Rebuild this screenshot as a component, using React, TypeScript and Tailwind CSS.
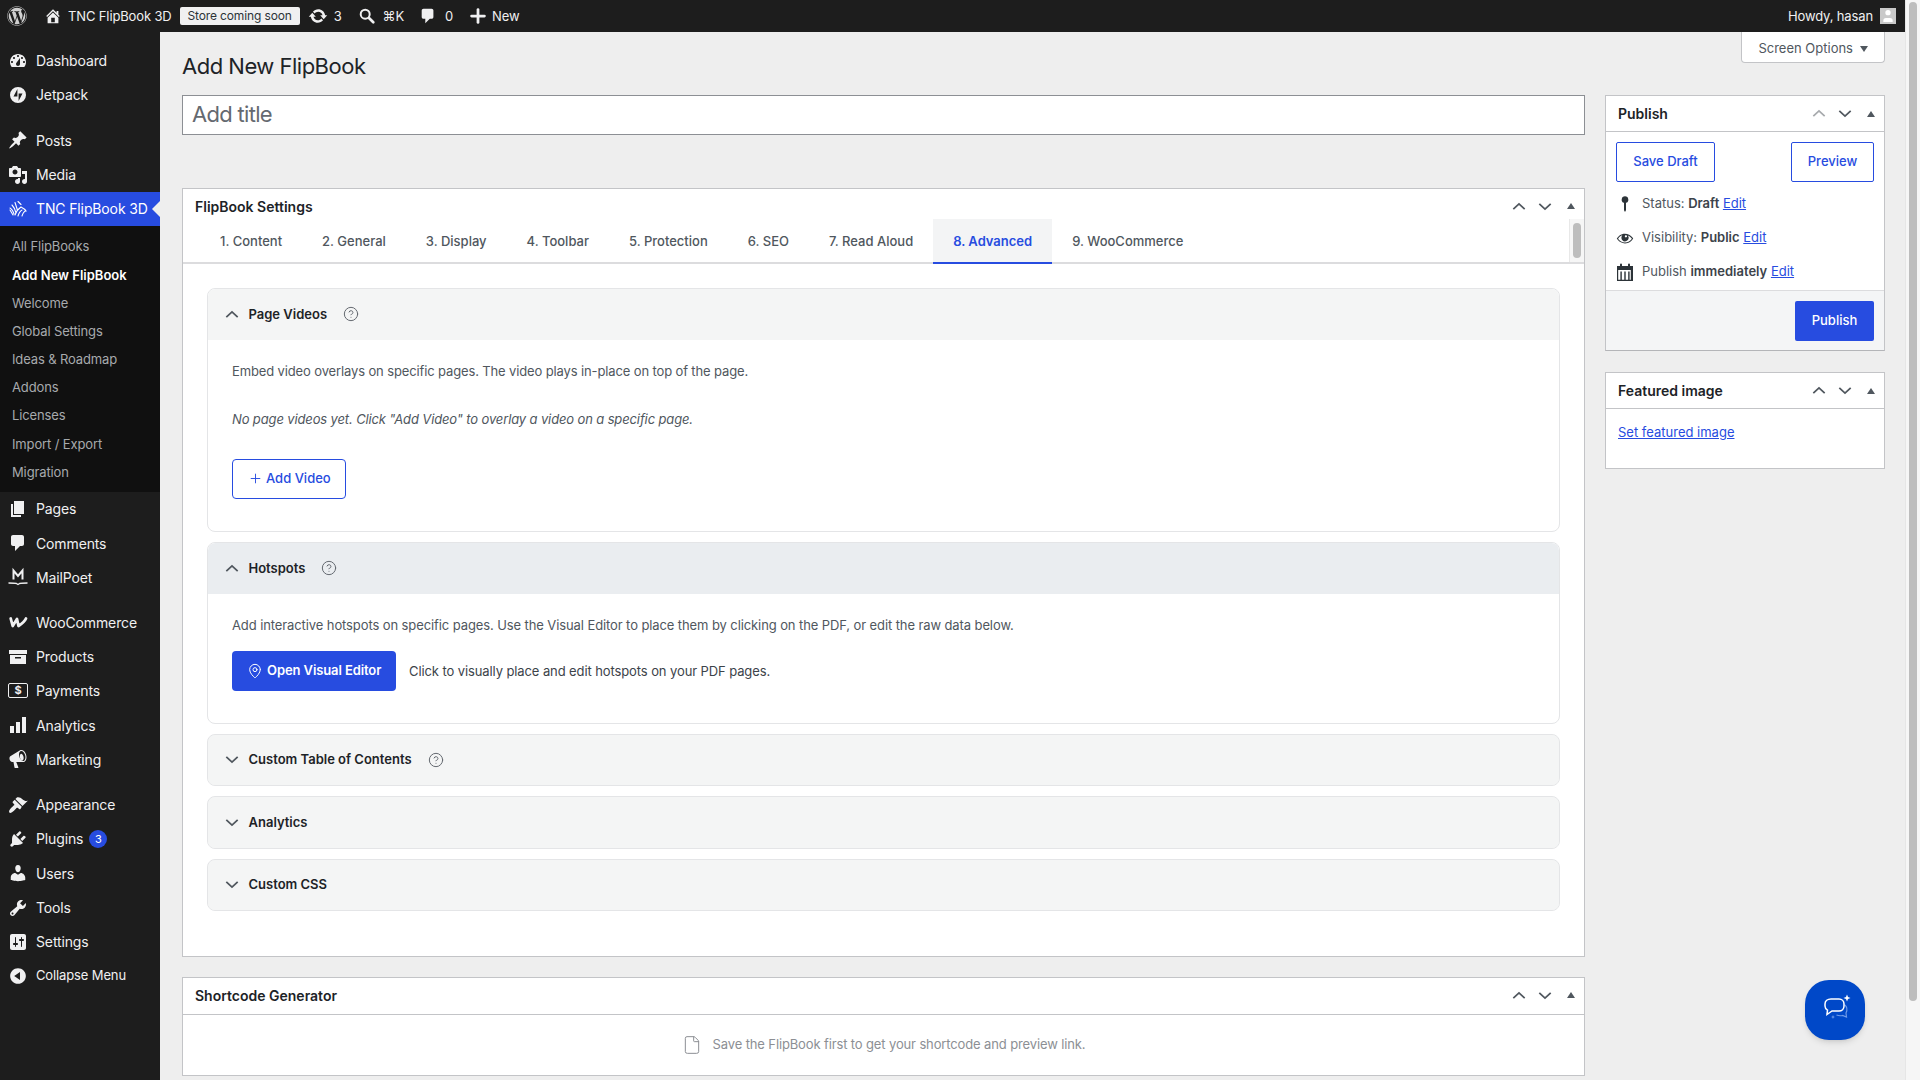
import type { ReactNode } from "react"
import { FaWordpress } from "react-icons/fa"
import { CircleHelp, File, MapPin, Plus, User } from "lucide-react"

const Dash = ({ d, className = "w-5 h-5" }: { d: string; className?: string }) => (
    <svg viewBox="0 0 20 20" fill="currentColor" className={className}>
        <path fillRule="evenodd" d={d} />
    </svg>
)

const d = {
    dashboard: "M3.76 16h12.48c1.1-1.37 1.76-3.11 1.76-5 0-4.42-3.58-8-8-8s-8 3.58-8 8c0 1.89.66 3.63 1.76 5zM10 4c.55 0 1 .45 1 1s-.45 1-1 1-1-.45-1-1 .45-1 1-1zM6 6c.55 0 1 .45 1 1s-.45 1-1 1-1-.45-1-1 .45-1 1-1zm8 0c.55 0 1 .45 1 1s-.45 1-1 1-1-.45-1-1 .45-1 1-1zm-5.37 5.55L12 7v6c0 1.1-.9 2-2 2s-2-.9-2-2c0-.57.24-1.08.63-1.45zM4 10c.55 0 1 .45 1 1s-.45 1-1 1-1-.45-1-1 .45-1 1-1zm12 0c.55 0 1 .45 1 1s-.45 1-1 1-1-.45-1-1 .45-1 1-1z",
    jetpack: "M10 2a8 8 0 1 0 0 16 8 8 0 0 0 0-16zM9.4 3.9v7.6H5.5zM10.6 16.1V8.5h3.9z",
    post: "M10.44 3.02l1.82-1.82 6.36 6.35-1.83 1.82c-1.05-.68-2.48-.57-3.41.36l-.75.75c-.92.93-1.04 2.35-.35 3.41l-1.83 1.82-2.41-2.41-2.8 2.79c-.42.42-3.38 2.71-3.8 2.29s1.86-3.39 2.28-3.81l2.79-2.79L4.1 9.36l1.83-1.82c1.05.69 2.48.57 3.4-.36l.75-.75c.93-.92 1.05-2.35.36-3.41z",
    media: "M13 11V4c0-.55-.45-1-1-1h-1.67L9 1H5L3.67 3H2c-.55 0-1 .45-1 1v7c0 .55.45 1 1 1h10c.55 0 1-.45 1-1zM7 4.5c1.38 0 2.5 1.12 2.5 2.5S8.38 9.5 7 9.5 4.5 8.38 4.5 7 5.62 4.5 7 4.5zM14 6h5v10.5c0 1.38-1.12 2.5-2.5 2.5S14 17.88 14 16.5s1.12-2.5 2.5-2.5c.17 0 .34.02.5.05V9h-3V6zm-4 8.05V13h2v3.5c0 1.38-1.12 2.5-2.5 2.5S7 17.88 7 16.5 8.12 14 9.5 14c.17 0 .34.02.5.05z",
    page: "M6 15V2h10v13H6zm-1 1h8v2H3V5h2v11z",
    comment: "M5 2h9c1.1 0 2 .9 2 2v7c0 1.1-.9 2-2 2h-2l-5 5v-5H5c-1.1 0-2-.9-2-2V4c0-1.1.9-2 2-2z",
    products: "M1 3h18v4H1zM2 8h16v9H2zM7 10v1.5h6V10z",
    analytics: "M2 11h4v7H2zM8 7h4v11H8zM14 2h4v16h-4z",
    marketing: "M18.15 5.94c.46 1.62.38 3.22-.02 4.48-.42 1.28-1.26 2.18-2.3 2.48-.16.06-.26.06-.4.06-.06.02-.12.02-.18.02-.06.02-.14.02-.22.02h-6.8l2.22 5.5c.02.14-.06.26-.14.34-.08.1-.24.16-.34.16H6.95c-.1 0-.26-.06-.34-.16-.08-.08-.16-.2-.14-.34l-1-5.5H4.25l-.02-.02c-.5.06-1.08-.18-1.54-.62s-.88-1.08-1.06-1.88c-.24-.8-.2-1.56-.02-2.2.18-.62.58-1.08 1.06-1.3l.02-.02 9-5.4c.1-.06.18-.1.24-.16.06-.04.14-.08.24-.12.16-.08.28-.12.5-.18 1.04-.3 2.24.1 3.22.98s1.84 2.24 2.26 3.86zm-2.58 5.98h-.02c.4-.1.74-.34 1.04-.7.58-.7.86-1.76.86-3.04 0-.64-.1-1.3-.28-1.98-.34-1.36-1.02-2.5-1.78-3.24s-1.68-1.1-2.46-.88c-.82.22-1.4.96-1.7 2-.32 1.04-.28 2.36.06 3.72.38 1.36 1 2.5 1.8 3.24.78.74 1.62 1.1 2.48.88zm-2.54-7.08c.22-.04.42-.02.62.04.38.16.76.48 1.1 1s.58 1.14.74 1.84c.16.68.2 1.34.1 1.92-.1.56-.3 1.04-.6 1.38-.16.2-.34.32-.56.38-.22.06-.42.04-.62-.04-.2-.1-.4-.24-.6-.44-.5-.52-.94-1.3-1.2-2.24-.24-.96-.24-1.86-.02-2.58.2-.7.58-1.16 1.04-1.26z",
    appearance: "M14.48 11.06L7.41 3.99l1.5-1.5c.5-.56 2.3-.47 3.51.32 1.21.8 1.43 1.28 2.91 2.1 1.18.64 2.45 1.26 4.45.85zm-.71.71L6.7 4.7 4.93 6.47c-.39.39-.39 1.02 0 1.41l1.06 1.06c.39.39.39 1.03 0 1.42-.6.6-6.37 5.43-4.6 7.2 1.77 1.77 6.6-4 7.2-4.6.39-.39 1.03-.39 1.42 0l1.06 1.06c.39.39 1.02.39 1.41 0z",
    plugins: "M13.11 4.36L9.87 7.6 8 5.73l3.24-3.24c.35-.34 1.05-.2 1.56.32.52.51.66 1.21.31 1.55zm-8 1.77l.91-1.12 9.01 9.01-1.19.84c-.71.71-2.63 1.16-3.82 1.16H6.14L4.9 17.26c-.59.59-1.54.59-2.12 0-.59-.58-.59-1.53 0-2.12l1.24-1.24v-3.88c0-1.13.4-3.19 1.09-3.89zm7.26 3.97l3.24-3.24c.34-.35 1.04-.21 1.55.31.52.51.66 1.21.31 1.55l-3.24 3.25z",
    users: "M10 9.25c-2.27 0-2.73-3.44-2.73-3.44C7 4.02 7.82 2 9.97 2c2.16 0 2.98 2.02 2.71 3.81 0 0-.41 3.44-2.68 3.44zm0 2.57L12.72 10c2.39 0 4.52 2.33 4.52 4.53v2.49s-3.65 1.13-7.24 1.13c-3.65 0-7.24-1.13-7.24-1.13v-2.49c0-2.25 1.94-4.48 4.47-4.48z",
    tools: "M16.68 9.77c-1.34 1.34-3.3 1.67-4.95.99l-5.41 6.52c-.99.99-2.59.99-3.58 0s-.99-2.59 0-3.57l6.52-5.42c-.68-1.65-.35-3.61.99-4.95 1.28-1.28 3.12-1.62 4.72-1.06l-2.89 2.89 2.82 2.82 2.86-2.87c.53 1.58.18 3.39-1.08 4.65zM3.81 16.21c.4.39 1.04.39 1.43 0 .4-.4.4-1.04 0-1.43-.39-.4-1.03-.4-1.43 0-.39.39-.39 1.03 0 1.43z",
    settings: "M18 16V4c0-1.1-.9-2-2-2H4c-1.1 0-2 .9-2 2v12c0 1.1.9 2 2 2h12c1.1 0 2-.9 2-2zM8 11h1c.55 0 1 .45 1 1s-.45 1-1 1H8v1.5c0 .28-.22.5-.5.5s-.5-.22-.5-.5V13H6c-.55 0-1-.45-1-1s.45-1 1-1h1V5.5c0-.28.22-.5.5-.5s.5.22.5.5V11zm5-2h-1c-.55 0-1-.45-1-1s.45-1 1-1h1V5.5c0-.28.22-.5.5-.5s.5.22.5.5V7h1c.55 0 1 .45 1 1s-.45 1-1 1h-1v5.5c0 .28-.22.5-.5.5s-.5-.22-.5-.5V9z",
    collapse: "M10 2.16c4.33 0 7.84 3.51 7.84 7.84s-3.51 7.84-7.84 7.84S2.16 14.33 2.16 10 5.71 2.16 10 2.16zm2 11.72V6.12L6.18 9.97z",
    home: "M16 8.5l1.53 1.53-1.06 1.06L10 4.62l-6.47 6.47-1.06-1.06L10 2.5l4 4v-2h2v4zm-6-2.46l6 5.99V18H4v-5.97zM12 17v-5H8v5h4z",
    update: "M10.2 3.28c3.53 0 6.43 2.61 6.92 6h2.08l-3.5 4-3.5-4h2.32c-.45-1.97-2.21-3.45-4.32-3.45-1.45 0-2.73.71-3.54 1.78L4.95 5.66C6.23 4.2 8.11 3.28 10.2 3.28zm-.4 13.44c-3.52 0-6.43-2.61-6.92-6H.8l3.5-4c1.17 1.33 2.33 2.67 3.5 4H5.48c.45 1.97 2.21 3.45 4.32 3.45 1.45 0 2.73-.71 3.54-1.78l1.71 1.95c-1.28 1.46-3.15 2.38-5.25 2.38z",
    eye: "M18.3 9.5C15 4.9 8.5 3.8 3.9 7.2c-1.2.9-2.2 2.1-3 3.4.2.4.5.8.8 1.2 3.3 4.6 9.6 5.6 14.2 2.4.9-.7 1.7-1.4 2.4-2.4.3-.4.5-.8.8-1.2-.3-.4-.5-.8-.8-1.1zm-8.2-2.3c.5-.5 1.3-.5 1.8 0s.5 1.3 0 1.8-1.3.5-1.8 0-.5-1.3 0-1.8zm-.1 7.7c-3.1 0-6-1.6-7.7-4.2C3.5 9 5.1 7.8 7 7c-.7.8-1 1.7-1 2.7 0 2.2 1.7 4.1 4 4.1 2.2 0 4.1-1.7 4.1-4 0-1-.4-2-1.1-2.7 1.9.8 3.5 2 4.7 3.7-1.700 2.6-4.6 4.2-7.7 4.2z",
    pin: "M10 1.500a3.700 3.700 0 0 1 1.100 7.230V17l-1.100 2-1.100-2V8.730A3.700 3.700 0 0 1 10 1.500z",
    calendar: "M2 4h3V2.5a1 1 0 0 1 2 0V4h6V2.5a1 1 0 0 1 2 0V4h3v15H2zM3.2 8v9.8h2.2V9.4h1.4v8.4h2.5V9.4h1.4v8.4h2.5V9.4h1.4v8.4h1.2V8z",
}

const SideIcon = ({ path }: { path: string }) => <Dash d={path} />

const TncIcon = () => (
    <svg viewBox="0 0 20 20" fill="none" stroke="currentColor" strokeWidth="1.1" strokeLinecap="round" className="w-5 h-5">
        <path d="M2 9c2 1 3 3 4 6M4 6c2 2 3 4 4 8M7 3.500c1 3 2 6 2.500 8M10 2.500l3 3M2 11l3 5M7 16c1-3 3-6 6-8 2 1 4 2 5 4-2 0-3 2-4 5M10 17c1-3 2-5 4-6" />
    </svg>
)

const MailPoetIcon = () => (
    <svg viewBox="0 0 20 20" fill="none" stroke="currentColor" className="w-5 h-5">
        <path strokeWidth="2" d="M5.500 12.500V3.500L10 9l4.500-5.500v9" />
        <path strokeWidth="1.300" d="M0.500 16c3 0 6 0 8 .5l1.500 1 1.500-1c2-.5 5-.5 8-.5" />
    </svg>
)

const WooIcon = () => (
    <svg viewBox="0 0 20 20" fill="none" stroke="currentColor" strokeWidth="2.800" strokeLinejoin="round" strokeLinecap="round" className="w-[21px] h-5">
        <path d="M2.200 6.500l2 7.500 4.300-7 1.500 7c3-2 6-4 7.500-7.500" />
    </svg>
)

const PaymentsIcon = () => (
    <span className="flex items-center justify-center w-5 h-[15px] border-[1.5px] border-[#f0f0f1] rounded-[2px] text-[11px] leading-none font-bold">
        $
    </span>
)

const SearchIcon = () => (
    <svg viewBox="0 0 20 20" fill="none" stroke="currentColor" className="w-[18px] h-[18px]">
        <circle cx="8" cy="8" r="5" strokeWidth="2.200" />
        <path strokeWidth="3" strokeLinecap="round" d="M12.500 12.500l4.500 4.500" />
    </svg>
)

type MenuEntry = { label: string; icon: ReactNode; badge?: string; small?: boolean }

const groupOne: MenuEntry[] = [
    { label: "Dashboard", icon: <SideIcon path={d.dashboard} /> },
    { label: "Jetpack", icon: <SideIcon path={d.jetpack} /> },
]
const groupTwo: MenuEntry[] = [
    { label: "Posts", icon: <SideIcon path={d.post} /> },
    { label: "Media", icon: <SideIcon path={d.media} /> },
]
const subMenu = ["All FlipBooks", "Add New FlipBook", "Welcome", "Global Settings", "Ideas & Roadmap", "Addons", "Licenses", "Import / Export", "Migration"]
const groupThree: MenuEntry[] = [
    { label: "Pages", icon: <SideIcon path={d.page} /> },
    { label: "Comments", icon: <SideIcon path={d.comment} /> },
    { label: "MailPoet", icon: <MailPoetIcon /> },
]
const groupFour: MenuEntry[] = [
    { label: "WooCommerce", icon: <WooIcon /> },
    { label: "Products", icon: <SideIcon path={d.products} /> },
    { label: "Payments", icon: <PaymentsIcon /> },
    { label: "Analytics", icon: <SideIcon path={d.analytics} /> },
    { label: "Marketing", icon: <SideIcon path={d.marketing} /> },
]
const groupFive: MenuEntry[] = [
    { label: "Appearance", icon: <SideIcon path={d.appearance} /> },
    { label: "Plugins", icon: <SideIcon path={d.plugins} />, badge: "3" },
    { label: "Users", icon: <SideIcon path={d.users} /> },
    { label: "Tools", icon: <SideIcon path={d.tools} /> },
    { label: "Settings", icon: <SideIcon path={d.settings} /> },
    { label: "Collapse Menu", icon: <SideIcon path={d.collapse} />, small: true },
]

const MenuRow = ({ item }: { item: MenuEntry }) => (
    <div className={`flex items-center h-[34.3px] text-[#f0f0f1] ${item.small ? "text-[13px]" : "text-[14px]"}`}>
        <span className="flex items-center justify-center w-9 shrink-0">{item.icon}</span>
        <span>{item.label}</span>
        {item.badge && (
            <span className="ml-[6px] flex items-center justify-center w-[18px] h-[18px] rounded-full bg-[#274ce0] text-white text-[11px]">
                {item.badge}
            </span>
        )}
    </div>
)

const MenuGroup = ({ items }: { items: MenuEntry[] }) => (
    <div>
        {items.map((item) => (
            <MenuRow key={item.label} item={item} />
        ))}
    </div>
)

const Sidebar = () => (
    <aside className="w-[160px] shrink-0 bg-[#1d1d1d] pt-[11.5px] tracking-[-0.13px]">
        <MenuGroup items={groupOne} />
        <div className="h-[11px]" />
        <MenuGroup items={groupTwo} />
        <div className="relative flex items-center h-[34.3px] bg-[#274ce0] text-white text-[14px]">
            <span className="flex items-center justify-center w-9"><TncIcon /></span>
            <span>TNC FlipBook 3D</span>
            <span className="absolute right-0 top-[9px] w-0 h-0 border-y-8 border-y-transparent border-r-8 border-r-[#eeeeee]" />
        </div>
        <div className="bg-[#101010] pt-[7px] pb-[5px]">
            {subMenu.map((label, i) => (
                <div key={label} className={`h-[28.2px] flex items-center pl-3 text-[13px] ${i === 1 ? "text-white font-semibold tracking-normal" : "text-[#a7aaad]"}`}>
                    {label}
                </div>
            ))}
        </div>
        <MenuGroup items={groupThree} />
        <div className="h-[10.5px]" />
        <MenuGroup items={groupFour} />
        <div className="h-[11px]" />
        <MenuGroup items={groupFive} />
    </aside>
)

const AdminBar = () => (
    <header className="h-8 shrink-0 flex items-center bg-[#1d1d1d] text-[#f0f0f1] text-[13px] tracking-[-0.13px]">
        <FaWordpress className="ml-[7px] w-5 h-5 text-[#d0d0d0]" />
        <Dash d={d.home} className="ml-[17px] w-[18px] h-[18px]" />
        <span className="ml-[6px] pt-px">TNC FlipBook 3D</span>
        <span className="ml-[8px] h-[18px] w-[120px] flex items-center justify-center bg-[#f0f0f1] text-[#2c3338] text-[12px] rounded-[2px]">Store coming soon</span>
        <Dash d={d.update} className="ml-[8px] w-[20px] h-[20px]" />
        <span className="ml-[6px] pt-px">3</span>
        <span className="ml-[16px]"><SearchIcon /></span>
        <span className="ml-[7px] pt-px">⌘K</span>
        <Dash d={d.comment} className="ml-[15px] w-[18px] h-[18px]" />
        <span className="ml-[8px] pt-px">0</span>
        <Plus className="ml-[14px] w-[22px] h-[22px]" strokeWidth={3} />
        <span className="ml-[3px] pt-px">New</span>
        <span className="ml-auto pt-px">Howdy, hasan</span>
        <span className="ml-[7px] mr-[9px] w-4 h-4 bg-[#c9c9c9] flex items-end justify-center overflow-hidden">
            <User className="w-4 h-4 text-white" fill="currentColor" strokeWidth={0} />
        </span>
    </header>
)

const Chevron = ({ up, muted }: { up?: boolean; muted?: boolean }) => (
    <svg viewBox="0 0 16 10" fill="none" strokeWidth="2" className={`w-[14px] h-[9px] ${muted ? "stroke-[#a7aaad]" : "stroke-[#50575e]"}`}>
        <path d={up ? "M1.500 8L8 2l6.500 6" : "M1.500 2L8 8l6.500-6"} />
    </svg>
)

const BoxControls = ({ mutedUp }: { mutedUp?: boolean }) => (
    <div className="flex items-center">
        <span className="flex justify-center w-[26px]"><Chevron up muted={mutedUp} /></span>
        <span className="flex justify-center w-[26px]"><Chevron /></span>
        <span className="ml-[9px] mr-[9px] w-0 h-0 border-x-[4px] border-x-transparent border-b-[6px] border-b-[#50575e]" />
    </div>
)

const BoxHeader = ({ title, bordered, h, mutedUp }: { title: string; bordered?: boolean; h: string; mutedUp?: boolean }) => (
    <div className={`flex items-center justify-between pl-3 ${h} ${bordered ? "border-b border-[#c3c4c7]" : ""}`}>
        <h2 className="text-[14px] font-semibold text-[#1d2327]">{title}</h2>
        <BoxControls mutedUp={mutedUp} />
    </div>
)

const tabs = ["1. Content", "2. General", "3. Display", "4. Toolbar", "5. Protection", "6. SEO", "7. Read Aloud", "8. Advanced", "9. WooCommerce"]

const Tabs = () => (
    <div className="relative flex h-[45px] pl-[17px] border-b-2 border-[#dcdcde]">
        {tabs.map((t) => (
            <div
                key={t}
                className={`flex items-center px-5 h-[45px] pt-[2px] border-b-2 text-[13px] font-medium ${t === "8. Advanced" ? "bg-[#f3f4f5] text-[#274ce0] border-[#274ce0] font-semibold" : "text-[#50575e] border-transparent"}`}
            >
                {t}
            </div>
        ))}
        <div className="absolute right-0 top-0 bottom-0 w-[15px] bg-[#f6f6f6] border-l border-[#e8e8e8]">
            <div className="mx-auto mt-1 w-2 h-[35px] rounded bg-[#bdbdbd]" />
        </div>
    </div>
)

const SectionHead = ({ title, open, help, active }: { title: string; open?: boolean; help?: boolean; active?: boolean }) => (
    <div className={`flex items-center h-[50.5px] pl-[17px] rounded-t-[7px] ${active ? "bg-[#eaedf0]" : "bg-[#f4f5f5]"}`}>
        <Chevron up={open} />
        <span className="ml-[9.5px] text-[13px] font-semibold text-[#1d2327]">{title}</span>
        {help && <CircleHelp className="ml-4 w-4 h-4 text-[#646970]" strokeWidth={1.500} />}
    </div>
)

const Section = ({ title, open, help, active, children }: { title: string; open?: boolean; help?: boolean; active?: boolean; children?: ReactNode }) => (
    <section className={`border border-[#e4e5e7] rounded-lg overflow-hidden ${open ? "" : "bg-[#f4f5f5]"}`}>
        <SectionHead title={title} open={open} help={help} active={active} />
        {children}
    </section>
)

const Settings = () => (
    <div className="bg-white border border-[#c3c4c7]">
        <div className="pt-[4px]">
            <BoxHeader title="FlipBook Settings" h="h-[26px]" />
        </div>
        <Tabs />
        <div className="flex flex-col gap-[10px] pt-[24px] pb-[45px] px-6">
            <Section title="Page Videos" open help>
                <div className="px-6 h-[191.5px] pt-[22px] text-[13px] leading-[19px] text-[#50575e] tracking-[-0.13px]">
                    <p>Embed video overlays on specific pages. The video plays in-place on top of the page.</p>
                    <p className="mt-[29px] italic">No page videos yet. Click "Add Video" to overlay a video on a specific page.</p>
                    <button className="mt-[30px] flex items-center gap-[3px] h-10 w-[114px] pl-[15px] border border-[#274ce0] rounded-[4px] text-[#274ce0] font-medium tracking-normal">
                        <Plus className="w-[15px] h-[15px]" strokeWidth={1.500} /> Add Video
                    </button>
                </div>
            </Section>
            <Section title="Hotspots" open help active>
                <div className="px-6 h-[129px] pt-[22px] text-[13px] leading-[19px] text-[#50575e] tracking-[-0.1px]">
                    <p>Add interactive hotspots on specific pages. Use the Visual Editor to place them by clicking on the PDF, or edit the raw data below.</p>
                    <div className="mt-[16px] flex items-center gap-[13px]">
                        <button className="flex items-center gap-[4px] h-10 w-[164px] pl-[15px] bg-[#274ce0] rounded-[4px] text-white font-semibold">
                            <MapPin className="w-4 h-4" strokeWidth={1.500} /> Open Visual Editor
                        </button>
                        <span className="pt-px text-[#3c434a]">Click to visually place and edit hotspots on your PDF pages.</span>
                    </div>
                </div>
            </Section>
            <Section title="Custom Table of Contents" help />
            <Section title="Analytics" />
            <Section title="Custom CSS" />
        </div>
    </div>
)

const Shortcode = () => (
    <div className="mt-[20px] bg-white border border-[#c3c4c7]">
        <BoxHeader title="Shortcode Generator" h="h-[37px] pb-[2px]" bordered />
        <div className="flex items-center justify-center gap-[11px] h-[60px] text-[13px] text-[#8c8f94] tracking-[-0.13px]">
            <File className="w-5 h-5" strokeWidth={1.200} />
            Save the FlipBook first to get your shortcode and preview link.
        </div>
    </div>
)

const StatusRow = ({ path, iconClass, children }: { path: string; iconClass?: string; children: ReactNode }) => (
    <div className="flex items-center h-[34px] pl-[10px] text-[13px] text-[#50575e]">
        <span className="w-[26px] shrink-0 text-[#2c3338]">
            <Dash d={path} className={iconClass ?? "w-[18px] h-[18px]"} />
        </span>
        <span>{children}</span>
    </div>
)

const EditLink = () => <a className="text-[#274ce0] underline">Edit</a>

const Publish = () => (
    <div className="bg-white border border-[#c3c4c7] border-b-[#b4b5b8]">
        <BoxHeader title="Publish" h="h-[36px]" bordered mutedUp />
        <div className="flex justify-between px-[10px] pt-[10px]">
            <button className="h-10 w-[99px] border border-[#274ce0] rounded-[2px] text-[13px] font-medium text-[#274ce0]">Save Draft</button>
            <button className="h-10 w-[83px] border border-[#274ce0] rounded-[2px] text-[13px] font-medium text-[#274ce0]">Preview</button>
        </div>
        <div className="pt-[5px] pb-[1px]">
            <StatusRow path={d.pin}>Status: <b className="font-semibold text-[#3c434a]">Draft</b> <EditLink /></StatusRow>
            <StatusRow path={d.eye}>Visibility: <b className="font-semibold text-[#3c434a]">Public</b> <EditLink /></StatusRow>
            <StatusRow path={d.calendar} iconClass="w-5 h-5 -ml-px">Publish <b className="font-semibold text-[#3c434a]">immediately</b> <EditLink /></StatusRow>
        </div>
        <div className="flex justify-end h-[60px] pt-[10px] pr-[10px] bg-[#f4f5f6] border-t border-[#dcdcde]">
            <button className="h-10 w-[79px] bg-[#274ce0] rounded-[2px] text-[13px] font-medium text-white">Publish</button>
        </div>
    </div>
)

const FeaturedImage = () => (
    <div className="mt-[21px] bg-white border border-[#c3c4c7]">
        <BoxHeader title="Featured image" h="h-[36px]" bordered />
        <div className="h-[59px] pl-3 pt-[14px] text-[13px] leading-[19px]">
            <a className="text-[#274ce0] underline">Set featured image</a>
        </div>
    </div>
)

const ChatButton = () => (
    <button className="absolute left-[1805px] top-[980px] flex items-center justify-center w-[60px] h-[60px] rounded-[24px] bg-[#0048c8] shadow-md">
        <svg viewBox="0 0 34 34" fill="none" className="w-[34px] h-[34px]">
            <path stroke="#6f9be8" strokeWidth="1.200" d="M27 12c2 2 2.500 5 1 8l.5 4-4-1.500c-2 .5-4 .3-6-.5" />
            <path stroke="#ffffff" strokeWidth="1.500" d="M13 6h8c3 0 5 2.200 5 5v2c0 3-2.200 5-5 5h-7l-5 3.500.5-4.300C7.500 16 7 14.500 7 13v-2c0-3 2.500-5 6-5z" />
            <path fill="#ffffff" d="M29 1.500l1 2.500 2.500 1-2.500 1-1 2.500-1-2.500-2.500-1 2.500-1z" />
            <path fill="#6f9be8" d="M15 22l.6 1.400 1.400.6-1.400.6-.6 1.400-.6-1.400-1.400-.6 1.400-.6z" />
        </svg>
    </button>
)

export default function App() {
    return (
        <div className="relative flex w-[1920px] h-[1080px] overflow-hidden bg-[#eeeeee] font-[family-name:Inter,'Noto_Sans',sans-serif]">
            <div className="flex flex-col w-[1905px] shrink-0">
                <AdminBar />
                <div className="flex flex-1 min-h-0">
                    <Sidebar />
                    <main className="flex-1 pl-[22px] pr-[20px]">
                        <div className="flex items-start justify-between h-[63px]">
                            <h1 className="mt-[16px] text-[22px] tracking-[-0.5px] leading-[36px] text-[#1d2327]">Add New FlipBook</h1>
                            <div className="flex items-center gap-[7px] h-[31px] pt-[4px] px-4 bg-white border border-t-0 border-[#c3c4c7] rounded-b-[4px] text-[13px] text-[#50575e]">
                                Screen Options
                                <span className="w-0 h-0 border-x-[4px] border-x-transparent border-t-[6px] border-t-[#50575e]" />
                            </div>
                        </div>
                        <div className="flex gap-5">
                            <div className="w-[1403px] shrink-0">
                                <div className="flex items-center h-10 pl-[9px] pb-[2px] bg-white border border-[#8c8f94] text-[22px] tracking-[-0.7px] text-[#646970]">
                                    Add title
                                </div>
                                <div className="mt-[53px]">
                                    <Settings />
                                    <Shortcode />
                                </div>
                            </div>
                            <div className="w-[280px] shrink-0">
                                <Publish />
                                <FeaturedImage />
                            </div>
                        </div>
                    </main>
                </div>
            </div>
            <div className="w-[15px] shrink-0 bg-[#f6f6f6] border-l border-[#e6e6e6] pl-[3px] pt-[2px]">
                <div className="w-2 h-[999px] rounded bg-[#bdbdbd]" />
            </div>
            <ChatButton />
        </div>
    )
}
